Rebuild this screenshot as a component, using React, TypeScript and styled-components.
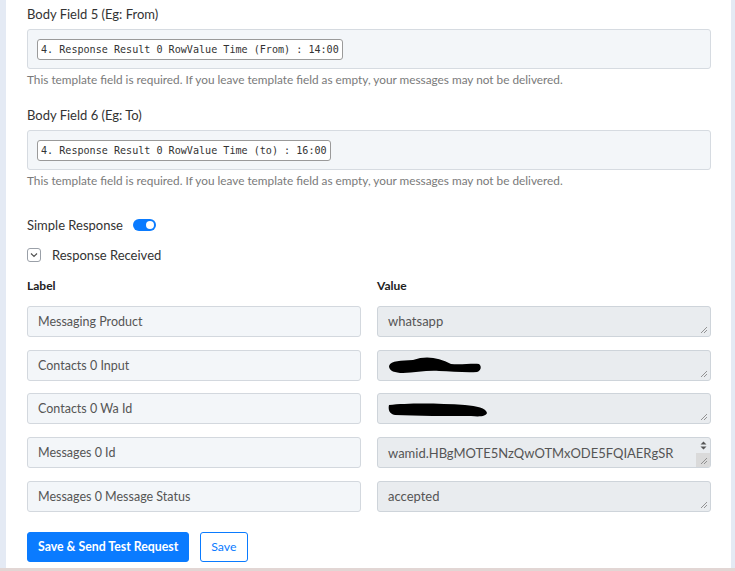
import React from "react";
import styled, { createGlobalStyle } from "styled-components";

const Global = createGlobalStyle`
  html, body { margin: 0; padding: 0; }
  body {
    background: #e4eaf4;
    font-family: Lato, "Open Sans", sans-serif;
    color: #333;
  }
  * { box-sizing: border-box; }
`;

const Frame = styled.div`
  width: 735px;
  height: 571px;
  overflow: hidden;
  display: flex;
  flex-direction: column;
  background: #e4eaf4;
`;

const Panel = styled.main`
  flex: 1;
  margin: 0 4px 0 6px;
  background: #fff;
  padding: 5px 20px 0 21px;
  display: flex;
  flex-direction: column;
  overflow: hidden;
`;

const BottomStrip = styled.div`
  height: 3px;
  flex: none;
  background: #e2d6d4;
`;

const FieldGroup = styled.section`
  display: flex;
  flex-direction: column;
  margin-bottom: 19px;
`;

const FieldLabel = styled.label`
  font-size: 13px;
  line-height: 18px;
  color: #333;
  margin-bottom: 6px;
`;

const TemplateBox = styled.div`
  height: 40px;
  background: #f3f6f9;
  border: 1px solid #d6dbe1;
  border-radius: 3px;
  display: flex;
  align-items: center;
  padding: 0 9px;
`;

const Chip = styled.span`
  font-family: "DejaVu Sans Mono", "Liberation Mono", monospace;
  font-size: 10.1px;
  line-height: 19px;
  height: 21px;
  padding: 0 3px;
  background: #fff;
  border: 1px solid #9a9a9a;
  border-radius: 3px;
  color: #333;
  white-space: nowrap;
`;

const Help = styled.p`
  margin: 3px 0 0;
  font-size: 11.8px;
  line-height: 15px;
  color: #7a7a7a;
`;

const InlineRow = styled.div<{ $top: number }>`
  display: flex;
  align-items: center;
  gap: 10px;
  margin-top: ${(p) => p.$top}px;
  font-size: 13px;
  line-height: 18px;
  height: 18px;
`;

const SwitchTrack = styled.span<{ $on: boolean }>`
  position: relative;
  width: 23px;
  height: 12px;
  border-radius: 6px;
  background: ${(p) => (p.$on ? "#0a7bff" : "#c8ccd2")};
  &::after {
    content: "";
    position: absolute;
    top: 2px;
    left: ${(p) => (p.$on ? "13px" : "2px")};
    width: 8px;
    height: 8px;
    border-radius: 50%;
    background: #fff;
  }
`;

const ChevronBox = styled.span`
  width: 14px;
  height: 14px;
  border: 1px solid #9aa0a8;
  border-radius: 3px;
  display: inline-flex;
  align-items: center;
  justify-content: center;
  margin-right: 1px;
`;

const Grid = styled.div`
  display: grid;
  grid-template-columns: 334px 334px;
  column-gap: 16px;
  row-gap: 12.75px;
  margin-top: 14px;
`;

const ColHead = styled.div`
  font-size: 12px;
  font-weight: 700;
  line-height: 16px;
  color: #222;
  margin-bottom: -1px;
`;

const LabelInput = styled.div`
  height: 31px;
  background: #f3f6f9;
  border: 1px solid #d3d8de;
  border-radius: 3px;
  padding: 0 10px;
  display: flex;
  align-items: center;
  font-size: 12.5px;
  color: #555;
  white-space: nowrap;
`;

const ValueArea = styled.div`
  position: relative;
  height: 31px;
  background: #e9ecef;
  border: 1px solid #ced4da;
  border-radius: 3px;
  padding: 0 10px;
  display: flex;
  align-items: center;
  font-size: 13px;
  color: #555;
  white-space: nowrap;
  overflow: hidden;
`;

const Grip = styled.svg`
  position: absolute;
  right: 2px;
  bottom: 2px;
`;

const ScrollRail = styled.div`
  position: absolute;
  top: 0;
  right: 0;
  bottom: 0;
  width: 14px;
  display: flex;
  flex-direction: column;
`;

const ScrollArrows = styled.div`
  flex: 1;
  display: flex;
  align-items: center;
  justify-content: center;
`;

const ScrollCorner = styled.div`
  height: 14px;
  background: #dadada;
`;

const Redaction = styled.svg`
  position: absolute;
  left: 9px;
`;

const Actions = styled.div`
  display: flex;
  gap: 11px;
  margin-top: 20px;
`;

const Button = styled.button<{ $primary?: boolean }>`
  height: 30px;
  padding: 0 10px;
  border-radius: 3px;
  font-family: Lato, "Open Sans", sans-serif;
  font-size: 12.3px;
  font-weight: ${(p) => (p.$primary ? 700 : 400)};
  color: ${(p) => (p.$primary ? "#fff" : "#0a7bff")};
  background: ${(p) => (p.$primary ? "#0a7bff" : "#fff")};
  border: 1px solid #0a7bff;
  cursor: pointer;
`;

const ResizeGrip = () => (
  <Grip width="8" height="8" viewBox="0 0 8 8">
    <path d="M1 7 L7 1 M4 7 L7 4" stroke="#888" strokeWidth="0.9" fill="none" />
  </Grip>
);

const scribbles: Record<string, string> = {
  a: "M2 12 C4 6 14 7 26 6 C40 1 52 4 64 10 C74 11 86 9 92 10 C95 12 94 17 90 18 C78 19 64 17 52 17 C40 16 28 19 16 19 C8 19 2 17 2 12 Z",
  b: "M2 6 C20 4 50 4 78 6 C90 7 99 9 100 14 C99 17 94 18 84 17 C60 17 30 17 8 16 C2 15 1 10 2 6 Z",
};

const Scribble = ({ kind, top }: { kind: string; top: number }) => (
  <Redaction width="104" height="22" viewBox="0 0 104 22" style={{ top }}>
    <path d={scribbles[kind]} fill="#000" />
  </Redaction>
);

type Row = { label: string; value?: string; redact?: "a" | "b"; scroll?: boolean };

const rows: Row[] = [
  { label: "Messaging Product", value: "whatsapp" },
  { label: "Contacts 0 Input", redact: "a" },
  { label: "Contacts 0 Wa Id", redact: "b" },
  { label: "Messages 0 Id", value: "wamid.HBgMOTE5NzQwOTMxODE5FQIAERgSR", scroll: true },
  { label: "Messages 0 Message Status", value: "accepted" },
];

const help =
  "This template field is required. If you leave template field as empty, your messages may not be delivered.";

export default function App() {
  return (
    <Frame>
      <Global />
      <Panel>
        <FieldGroup>
          <FieldLabel>Body Field 5 (Eg: From)</FieldLabel>
          <TemplateBox>
            <Chip>4. Response Result 0 RowValue Time (From) : 14:00</Chip>
          </TemplateBox>
          <Help>{help}</Help>
        </FieldGroup>
        <FieldGroup>
          <FieldLabel>Body Field 6 (Eg: To)</FieldLabel>
          <TemplateBox>
            <Chip>4. Response Result 0 RowValue Time (to) : 16:00</Chip>
          </TemplateBox>
          <Help>{help}</Help>
        </FieldGroup>

        <InlineRow $top={9}>
          Simple Response
          <SwitchTrack $on />
        </InlineRow>
        <InlineRow $top={12}>
          <ChevronBox>
            <svg width="8" height="6" viewBox="0 0 8 6">
              <path d="M1 1.5 L4 4.5 L7 1.5" stroke="#555" strokeWidth="1.2" fill="none" />
            </svg>
          </ChevronBox>
          Response Received
        </InlineRow>

        <Grid>
          <ColHead>Label</ColHead>
          <ColHead>Value</ColHead>
          {rows.map((r) => (
            <React.Fragment key={r.label}>
              <LabelInput>{r.label}</LabelInput>
              <ValueArea>
                {r.value}
                {r.redact && <Scribble kind={r.redact} top={r.redact === "a" ? 3 : 5} />}
                {r.scroll ? (
                  <ScrollRail>
                    <ScrollArrows>
                      <svg width="7" height="9" viewBox="0 0 7 9">
                        <path d="M0.5 3.5 L3.5 0.5 L6.5 3.5 Z M0.5 5.5 L3.5 8.5 L6.5 5.5 Z" fill="#555" />
                      </svg>
                    </ScrollArrows>
                    <ScrollCorner>
                      <ResizeGrip />
                    </ScrollCorner>
                  </ScrollRail>
                ) : (
                  <ResizeGrip />
                )}
              </ValueArea>
            </React.Fragment>
          ))}
        </Grid>

        <Actions>
          <Button $primary>Save &amp; Send Test Request</Button>
          <Button>Save</Button>
        </Actions>
      </Panel>
      <BottomStrip />
    </Frame>
  );
}
